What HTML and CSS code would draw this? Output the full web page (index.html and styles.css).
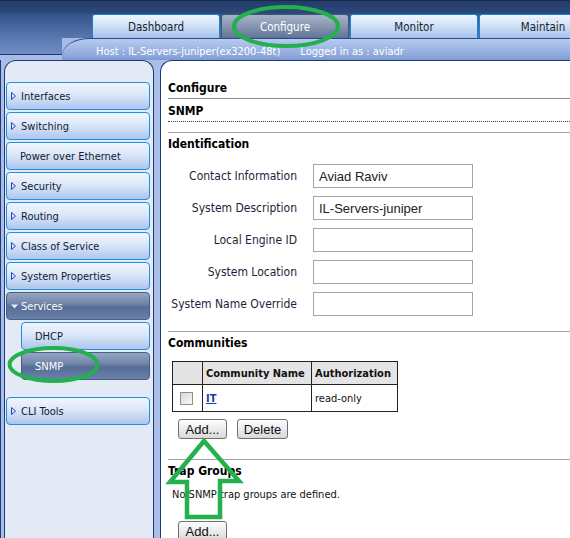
FILE: index.html
```html
<!DOCTYPE html>
<html>
<head>
<meta charset="utf-8">
<link rel="stylesheet" href="styles.css">
</head>
<body>
<div class="header">
  <div class="topbar"></div>
  <div class="tabs">
    <div class="tab">Dashboard</div>
    <div class="tab active">Configure</div>
    <div class="tab">Monitor</div>
    <div class="tab">Maintain</div>
  </div>
  <div class="hostrow">
    <div class="hostgap"></div>
    <div class="hostband"><span>Host : IL-Servers-juniper(ex3200-48t)</span><span>Logged in as : aviadr</span></div>
  </div>
</div>
<div class="main">
  <nav class="sidebar">
    <div class="item"><svg class="tri" width="5" height="8" viewBox="0 0 5 8"><polygon points="0.5,0.5 4.5,4 0.5,7.5" fill="none" stroke="#2a3fcf" stroke-width="1"/></svg>Interfaces</div>
    <div class="item"><svg class="tri" width="5" height="8" viewBox="0 0 5 8"><polygon points="0.5,0.5 4.5,4 0.5,7.5" fill="none" stroke="#2a3fcf" stroke-width="1"/></svg>Switching</div>
    <div class="item plain">Power over Ethernet</div>
    <div class="item"><svg class="tri" width="5" height="8" viewBox="0 0 5 8"><polygon points="0.5,0.5 4.5,4 0.5,7.5" fill="none" stroke="#2a3fcf" stroke-width="1"/></svg>Security</div>
    <div class="item"><svg class="tri" width="5" height="8" viewBox="0 0 5 8"><polygon points="0.5,0.5 4.5,4 0.5,7.5" fill="none" stroke="#2a3fcf" stroke-width="1"/></svg>Routing</div>
    <div class="item"><svg class="tri" width="5" height="8" viewBox="0 0 5 8"><polygon points="0.5,0.5 4.5,4 0.5,7.5" fill="none" stroke="#2a3fcf" stroke-width="1"/></svg>Class of Service</div>
    <div class="item"><svg class="tri" width="5" height="8" viewBox="0 0 5 8"><polygon points="0.5,0.5 4.5,4 0.5,7.5" fill="none" stroke="#2a3fcf" stroke-width="1"/></svg>System Properties</div>
    <div class="item sel"><svg class="tri-down" width="7" height="5" viewBox="0 0 7 5"><polygon points="0,0.5 7,0.5 3.5,4.5" fill="#e4ecfa"/></svg>Services</div>
    <div class="item sub">DHCP</div>
    <div class="item sub sel">SNMP</div>
    <div class="item cli"><svg class="tri" width="5" height="8" viewBox="0 0 5 8"><polygon points="0.5,0.5 4.5,4 0.5,7.5" fill="none" stroke="#2a3fcf" stroke-width="1"/></svg>CLI Tools</div>
  </nav>
  <section class="content">
    <h1 class="page-title">Configure</h1>
    <h2 class="sub-title">SNMP</h2>
    <div class="section">
      <h3 class="sec-title">Identification</h3>
      <div class="form">
        <label class="lbl">Contact Information</label><input class="field" value="Aviad Raviv">
        <label class="lbl">System Description</label><input class="field" value="IL-Servers-juniper">
        <label class="lbl">Local Engine ID</label><input class="field" value="">
        <label class="lbl">System Location</label><input class="field" value="">
        <label class="lbl">System Name Override</label><input class="field" value="">
      </div>
    </div>
    <div class="section comm">
      <h3 class="sec-title">Communities</h3>
      <table class="grid">
        <tr class="head"><th class="c1"></th><th class="c2">Community Name</th><th class="c3">Authorization</th></tr>
        <tr class="row"><td class="c1"><span class="chk"></span></td><td class="c2"><a class="link">IT</a></td><td class="c3">read-only</td></tr>
      </table>
      <div class="buttons">
        <button class="btn add">Add...</button>
        <button class="btn del">Delete</button>
      </div>
    </div>
    <div class="section trap">
      <h3 class="sec-title">Trap Groups</h3>
      <p class="note">No SNMP trap groups are defined.</p>
      <div class="buttons low">
        <button class="btn add">Add...</button>
      </div>
    </div>
  </section>
</div>
<svg class="marks" width="570" height="538" viewBox="0 0 570 538">
  <ellipse cx="286" cy="26.5" rx="52" ry="19.5" fill="none" stroke="#22b14c" stroke-width="4"/>
  <ellipse cx="53.5" cy="364.5" rx="44" ry="16.5" fill="none" stroke="#22b14c" stroke-width="4"/>
  <polygon points="204,441 239,481 220,481 220,517 187,517 187,482 170,482" fill="none" stroke="#22b14c" stroke-width="4.5" stroke-linejoin="miter"/>
</svg>
</body>
</html>
```
FILE: styles.css
```css
* { box-sizing: border-box; margin: 0; padding: 0; }
html, body { width: 570px; height: 538px; overflow: hidden; }
body {
  position: relative;
  background: #fff;
  font-family: "DejaVu Sans Condensed", "Liberation Sans", sans-serif;
  font-size: 12px;
  color: #222;
}

/* header */
.header {
  height: 60px;
  overflow: hidden;
  background: linear-gradient(#223c6a 0, #2c4878 13px, #35538a 14px, #5a78b0 38px, #7894cc 60px);
}
.topbar { height: 14px; border-top: 1px solid #17284c; }
.tabs { display: flex; gap: 1px; padding-left: 92px; height: 24px; overflow: hidden; }
.tab {
  flex: none;
  width: 128px;
  height: 24px;
  display: flex;
  align-items: center;
  justify-content: center;
  border: 1px solid #1784d4;
  border-bottom: none;
  border-radius: 3px 3px 0 0;
  background: linear-gradient(#f0f6fe, #cddff5 50%, #a6c1ea);
  color: #1c1c30;
  font-size: 11.5px;
}
.tab.active {
  background: linear-gradient(#a6b2c6, #8796b0 50%, #5f7496);
  border-color: #3e5478;
  color: #fff;
}
.hostrow { display: flex; height: 22px; background: #a6bce6; }
.hostgap {
  width: 62px;
  height: 17px;
  border-bottom: 1px solid #1d3a78;
  background: linear-gradient(#5b79b1, #6f8cc4);
}
.hostband {
  flex: 1;
  height: 22px;
  border-top: 1px solid #2a4a88;
  border-top-left-radius: 28px 17px;
  background: linear-gradient(#b8cbef, #8ca7da 80%, #7d99d0);
  display: flex;
  align-items: center;
  gap: 20px;
  padding: 3px 0 0 34px;
  color: #fff;
  font-size: 11px;
  white-space: nowrap;
}

/* main */
.main {
  display: flex;
  height: 478px;
  background: #a9bfe8;
  border-left: 1px solid #1d3a78;
  padding-left: 3px;
}
.sidebar {
  flex: none;
  width: 150px;
  border: 1px solid #1d3a78;
  border-bottom: none;
  border-radius: 12px 12px 0 0;
  background: #e3eaf6;
  padding: 21px 3px 0 1px;
}
.item {
  height: 28px;
  margin-bottom: 2px;
  display: flex;
  align-items: center;
  padding-left: 4px;
  border: 1px solid #1f8fe0;
  border-radius: 4px;
  background: linear-gradient(#f2f6fd, #dbe7f8 45%, #adc6ed);
  color: #141a30;
  font-size: 11px;
  white-space: nowrap;
}
.tri { flex: none; margin-right: 5px; }
.tri-down { flex: none; margin-right: 3px; }
.item.plain { padding-left: 13px; }
.item.sub { margin-left: 15px; padding-left: 13px; }
.item.sel {
  border-color: #485f8c;
  background: linear-gradient(#95a6c2, #7286aa 40%, #566d95 55%, #6a82aa);
  color: #fff;
}
.item.cli { margin-top: 17px; }

.content {
  flex: 1;
  margin-left: 6px;
  border-top: 1px solid #1d3a78;
  border-left: 1px solid #1d3a78;
  border-top-left-radius: 12px;
  background: #fff;
  padding-left: 7px;
}
.page-title, .sub-title, .sec-title {
  font-size: 12px;
  font-weight: bold;
  line-height: 16px;
  color: #000;
}
.page-title { padding: 19px 0 2px; border-bottom: 1px solid #8a8a8a; }
.sub-title { padding: 4px 0 2px; border-bottom: 1px dotted #444; }
.section { border-top: 1px solid #a2a2a2; margin-top: 10px; }
.sec-title { padding-top: 3px; }

.form {
  display: grid;
  grid-template-columns: 129px 160px;
  column-gap: 16px;
  row-gap: 8px;
  margin-top: 12px;
}
.lbl {
  justify-self: end;
  align-self: center;
  color: #1e1e3c;
  font-size: 12px;
  white-space: nowrap;
}
.field {
  height: 24px;
  border: 1px solid #a5a5a5;
  padding: 0 5px;
  font-family: "Liberation Sans", sans-serif;
  font-size: 13px;
  color: #222;
  background: #fff;
  outline: none;
}
.section.comm { margin-top: 15px; }

.grid {
  margin: 10px 0 0 4px;
  border-collapse: collapse;
  border: 1px solid #222;
  font-size: 11px;
}
.grid th, .grid td { border: 1px solid #222; text-align: left; }
.grid .head th { height: 23px; background: #e4e4e4; font-weight: bold; color: #111; padding: 0 3px; }
.grid .row td { height: 27px; padding: 0 3px; color: #111; }
.grid .c1 { width: 30px; }
.grid .c2 { width: 109px; }
.grid .c3 { width: 86px; }
.grid .row .c1 { padding-left: 7px; }
.chk {
  display: block;
  width: 13px;
  height: 13px;
  border: 1px solid #8e8f8f;
  background: linear-gradient(135deg, #d8d8d8, #f8f8f8);
}
.link { color: #1a3aa8; font-weight: bold; text-decoration: underline; }

.buttons { display: flex; gap: 10px; margin: 7px 0 0 10px; }
.btn {
  height: 20px;
  border: 1px solid #707070;
  border-radius: 3px;
  background: linear-gradient(#fdfdfd, #ececec 50%, #d8d8d8);
  font-family: "Liberation Sans", sans-serif;
  font-size: 13px;
  color: #111;
  padding: 0;
}
.btn.add { width: 49px; }
.btn.del { width: 51px; }
.section.trap { margin-top: 20px; }
.note { margin: 8px 0 0 4px; line-height: 16px; font-size: 11px; color: #111; }
.buttons.low { margin-top: 18px; }

.marks { position: absolute; left: 0; top: 0; pointer-events: none; }
```
